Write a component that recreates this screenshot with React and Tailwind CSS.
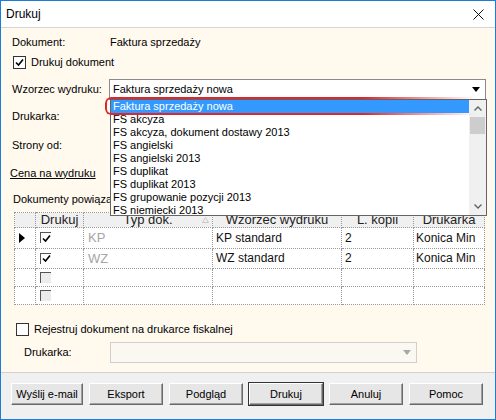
import React from "react";

const items = [
  "Faktura sprzedaży nowa",
  "FS akcyza",
  "FS akcyza, dokument dostawy 2013",
  "FS angielski",
  "FS angielski 2013",
  "FS duplikat",
  "FS duplikat 2013",
  "FS grupowanie pozycji 2013",
  "FS niemiecki 2013",
];

const rows = [
  { checked: true, typ: "KP", wzorzec: "KP standard", kopii: "2", drukarka: "Konica Min", current: true },
  { checked: true, typ: "WZ", wzorzec: "WZ standard", kopii: "2", drukarka: "Konica Min" },
  { empty: true },
  { empty: true },
];

const Check = () => (
  <svg width="9" height="9" viewBox="0 0 9 9">
    <path d="M1 4.5 L3.5 7 L8 1.5" stroke="#000" strokeWidth="1.6" fill="none" />
  </svg>
);

const BigCheckbox = ({ checked }) => (
  <div className="w-[13px] h-[13px] border border-[#333] bg-white flex items-center justify-center">
    {checked && <Check />}
  </div>
);

// mały checkbox w siatce (klasyczny, wklęsły)
const GridCheckbox = ({ checked, disabled }) => (
  <div
    className={`w-[11px] h-[11px] border-t-[1.5px] border-l-[1.5px] border-t-[#555] border-l-[#555] flex items-center justify-center ${
      disabled ? "bg-[#ececec]" : "bg-white"
    }`}
  >
    {checked && <Check />}
  </div>
);

const Combo = ({ value, disabled, className }) => (
  <div
    className={`h-[21px] border flex items-center justify-between pl-[3px] pr-[5px] ${
      disabled ? "border-[#cfcfcf] bg-[#fbf8f1]" : "border-[#8a8a8a] bg-white"
    } ${className}`}
  >
    <span className="text-[11px]">{value}</span>
    <svg width="8" height="5" viewBox="0 0 8 5">
      <path d="M0 0 H8 L4 5 Z" fill={disabled ? "#a8a8a8" : "#000"} />
    </svg>
  </div>
);

const Button = ({ label, isDefault, wide }) => (
  <button
    className={`h-[22px] ${wide ? "w-[72px]" : "w-[74px]"} bg-[#e6e6e6] text-[11px] text-black border border-t-white border-l-white border-b-[#696969] border-r-[#696969] shadow-[inset_-1px_-1px_0_#a0a0a0] ${
      isDefault ? "outline outline-1 outline-[#333]" : ""
    }`}
  >
    {label}
  </button>
);

export default function App() {
  return (
    <div className="w-[496px] h-[420px] border border-[#1c7cd6] flex flex-col bg-white text-black font-['Liberation_Sans',Arial,sans-serif] overflow-hidden">
      {/* title bar */}
      <div className="h-[26px] flex items-center justify-between pl-[5px] pr-[11px]">
        <span className="text-[12px]">Drukuj</span>
        <svg width="11" height="11" viewBox="0 0 11 11">
          <path d="M0.5 0.5 L10.5 10.5 M10.5 0.5 L0.5 10.5" stroke="#111" strokeWidth="1" />
        </svg>
      </div>
      <div className="h-px bg-[#d4d4d4]" />

      {/* content */}
      <div className="flex-1 bg-[#fff9ee] relative pl-[11px] pt-[6px] text-[11px]">
        <div className="h-[16px] flex items-center">
          <span className="w-[98px]">Dokument:</span>
          <span>Faktura sprzedaży</span>
        </div>

        <div className="h-[16px] mt-[4px] flex items-center gap-[5px] pl-[1px]">
          <BigCheckbox checked />
          <span>Drukuj dokument</span>
        </div>

        <div className="mt-[9px] flex items-center">
          <span className="w-[97px]">Wzorzec wydruku:</span>
          <Combo value="Faktura sprzedaży nowa" className="w-[377px]" />
        </div>

        <div className="h-[16px] mt-[8px] flex items-center">Drukarka:</div>
        <div className="h-[16px] mt-[13px] flex items-center">Strony od:</div>
        <div className="h-[16px] mt-[12px] flex items-center -ml-[2px]">
          <span className="underline">Cena na wydruku</span>
        </div>
        <div className="h-[16px] mt-[10px] flex items-center pl-[1px]">Dokumenty powiązane</div>

        {/* grid */}
        <table className="mt-[5px] ml-[2px] border-collapse table-fixed w-[470px] bg-white">
          <colgroup>
            <col className="w-[21px]" />
            <col className="w-[48px]" />
            <col className="w-[129px]" />
            <col className="w-[129px]" />
            <col className="w-[72px]" />
            <col className="w-[71px]" />
          </colgroup>
          <thead>
            <tr className="h-[15px] bg-[#f0f0f0] text-[13px] leading-[14px] text-[#222]">
              <th className="border border-dotted border-[#9a9a9a] font-normal"></th>
              <th className="border border-dotted border-[#9a9a9a] font-normal">Drukuj</th>
              <th className="border border-dotted border-[#9a9a9a] font-normal relative">
                Typ dok.
                <svg className="absolute right-[3px] top-[4px]" width="7" height="6" viewBox="0 0 7 6">
                  <path d="M3.5 0.5 L6.5 5.5 H0.5 Z" fill="none" stroke="#c8c8c8" strokeWidth="1" />
                </svg>
              </th>
              <th className="border border-dotted border-[#9a9a9a] font-normal">Wzorzec wydruku</th>
              <th className="border border-dotted border-[#9a9a9a] font-normal">L. kopii</th>
              <th className="border border-dotted border-[#9a9a9a] font-normal">Drukarka</th>
            </tr>
          </thead>
          <tbody className="text-[12px] text-[#111]">
            {rows.map((r, i) => (
              <tr key={i} className="h-[18px]">
                <td className="border border-dotted border-[#9a9a9a] pl-[4px]">
                  {r.current && (
                    <svg width="6" height="10" viewBox="0 0 6 10">
                      <path d="M0 0 L6 5 L0 10 Z" fill="#000" />
                    </svg>
                  )}
                </td>
                <td className="border border-dotted border-[#9a9a9a] pl-[4px]">
                  <GridCheckbox checked={r.checked} disabled={r.empty} />
                </td>
                <td className="border border-dotted border-[#9a9a9a] pl-[4px] text-[#a6a6a6] text-[13px]">{r.typ}</td>
                <td className="border border-dotted border-[#9a9a9a] pl-[3px]">{r.wzorzec}</td>
                <td className="border border-dotted border-[#9a9a9a] pl-[3px]">{r.kopii}</td>
                <td className="border border-dotted border-[#9a9a9a] pl-[2px] whitespace-nowrap overflow-hidden">{r.drukarka}</td>
              </tr>
            ))}
          </tbody>
        </table>

        <div className="h-[16px] mt-[16px] flex items-center gap-[5px] pl-[4px]">
          <BigCheckbox />
          <span>Rejestruj dokument na drukarce fiskalnej</span>
        </div>

        <div className="mt-[5px] flex items-center pl-[12px]">
          <span className="w-[86px]">Drukarka:</span>
          <Combo value="" disabled className="w-[307px]" />
        </div>

        {/* otwarta lista wzorców */}
        <div className="absolute left-[109px] top-[71px] w-[377px] h-[117px] border border-[#646464] bg-white flex">
          <div className="flex-1 flex flex-col">
            {items.map((it, i) => (
              <div
                key={it}
                className={`h-[13px] leading-[13px] pl-[2px] whitespace-nowrap ${
                  i === 0 ? "bg-[#3399ff] text-white" : ""
                }`}
              >
                {it}
              </div>
            ))}
          </div>
          <div className="w-[17px] bg-[#f0f0f0] flex flex-col items-center">
            <div className="h-[17px] flex items-center justify-center">
              <svg width="8" height="5" viewBox="0 0 8 5">
                <path d="M0.5 4.5 L4 1 L7.5 4.5" stroke="#606060" strokeWidth="1.3" fill="none" />
              </svg>
            </div>
            <div className="w-[15px] h-[17px] bg-[#cdcdcd]" />
            <div className="flex-1" />
            <div className="h-[17px] flex items-center justify-center">
              <svg width="8" height="5" viewBox="0 0 8 5">
                <path d="M0.5 0.5 L4 4 L7.5 0.5" stroke="#606060" strokeWidth="1.3" fill="none" />
              </svg>
            </div>
          </div>
        </div>

        {/* czerwone zaznaczenie */}
        <div className="absolute left-[104px] top-[69px] w-[370px] h-[18px] border-2 border-r-0 border-[#e0262c] rounded-l-[6px] shadow-[0_0_3px_rgba(224,38,44,0.6)] [mask-image:linear-gradient(to_right,black_70%,transparent)]" />
      </div>

      <div className="h-px bg-[#d0d0d0]" />
      {/* button bar */}
      <div className="h-[46px] bg-[#f0f0f0] flex items-start pt-[10px] pl-[10px] gap-[6px]">
        <Button label="Wyślij e-mail" wide />
        <Button label="Eksport" />
        <Button label="Podgląd" />
        <Button label="Drukuj" isDefault />
        <Button label="Anuluj" />
        <Button label="Pomoc" />
      </div>
    </div>
  );
}
